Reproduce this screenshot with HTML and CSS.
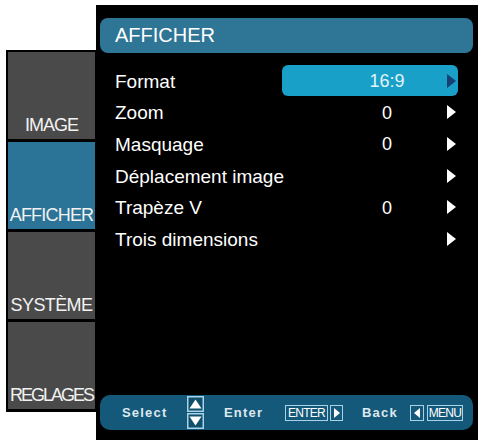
FILE: index.html
```html
<!DOCTYPE html>
<html>
<head>
<meta charset="utf-8">
<link rel="stylesheet" href="styles.css">
</head>
<body>
  <nav class="sidebar">
    <div class="tab"><span class="tab-label ls-image">IMAGE</span></div>
    <div class="tab tab-active"><span class="tab-label ls-afficher">AFFICHER</span></div>
    <div class="tab"><span class="tab-label ls-systeme">SYSTÈME</span></div>
    <div class="tab"><span class="tab-label ls-reglages">REGLAGES</span></div>
  </nav>
  <main class="panel">
    <header class="title-bar">AFFICHER</header>
    <ul class="rows">
      <li class="row row-selected">
        <span class="label">Format</span>
        <span class="cell"><span class="value value-selected">16:9</span><span class="arrow arrow-dark"></span></span>
      </li>
      <li class="row">
        <span class="label">Zoom</span>
        <span class="cell"><span class="value">0</span><span class="arrow"></span></span>
      </li>
      <li class="row">
        <span class="label">Masquage</span>
        <span class="cell"><span class="value">0</span><span class="arrow"></span></span>
      </li>
      <li class="row">
        <span class="label">Déplacement image</span>
        <span class="cell"><span class="value"></span><span class="arrow"></span></span>
      </li>
      <li class="row">
        <span class="label">Trapèze V</span>
        <span class="cell"><span class="value">0</span><span class="arrow"></span></span>
      </li>
      <li class="row">
        <span class="label">Trois dimensions</span>
        <span class="cell"><span class="value"></span><span class="arrow"></span></span>
      </li>
    </ul>
    <footer class="help-bar">
      <span class="help-text help-select">Select</span>
      <svg class="updown" width="17" height="33" viewBox="0 0 17 33">
        <rect x="0.75" y="0.75" width="15.5" height="14.5" fill="#10506d" stroke="#a6d3e8" stroke-width="1.5"/>
        <polygon points="2.5,12.5 8.5,3.5 14.5,12.5" fill="#ffffff"/>
        <rect x="0.75" y="17.75" width="15.5" height="14.5" fill="#10506d" stroke="#a6d3e8" stroke-width="1.5"/>
        <polygon points="2.5,20.5 8.5,29.5 14.5,20.5" fill="#ffffff"/>
      </svg>
      <span class="help-text help-enter">Enter</span>
      <span class="key key-enter">ENTER</span>
      <span class="key key-arrow"><span class="tri-right"></span></span>
      <span class="help-text help-back">Back</span>
      <span class="key key-arrow key-left"><span class="tri-left"></span></span>
      <span class="key key-menu">MENU</span>
    </footer>
  </main>
</body>
</html>
```
FILE: styles.css
```css
* {
  box-sizing: border-box;
}

html, body {
  margin: 0;
  padding: 0;
}

body {
  width: 478px;
  height: 440px;
  overflow: hidden;
  background: #ffffff;
  display: flex;
  align-items: flex-start;
  font-family: "Liberation Sans", Arial, sans-serif;
}

/* ---------- sidebar ---------- */
.sidebar {
  margin-top: 50px;
  margin-left: 6px;
  width: 90px;
  background: #000000;
  padding: 2px 1px 3px 2px;
  display: flex;
  flex-direction: column;
  gap: 3px;
}

.tab {
  height: 87px;
  background: #4a4a4a;
  display: flex;
  align-items: flex-end;
  justify-content: center;
  padding-bottom: 5px;
  overflow: visible;
}

.tab-active {
  background: #2c7398;
}

.tab-label {
  color: #f2f2f2;
  font-size: 18px;
  line-height: 18px;
  white-space: nowrap;
}

.ls-image { letter-spacing: -1px; }
.ls-afficher { letter-spacing: -0.8px; }
.ls-systeme { letter-spacing: -0.6px; }
.ls-reglages { letter-spacing: -2px; }

/* ---------- main panel ---------- */
.panel {
  margin-top: 5px;
  width: 382px;
  height: 435px;
  background: #000000;
  padding: 13px 5px 10px 4px;
  display: flex;
  flex-direction: column;
}

.title-bar {
  height: 35px;
  background: #2f7596;
  border-radius: 8px;
  color: #ffffff;
  font-size: 20px;
  line-height: 35px;
  padding-left: 15px;
}

.rows {
  list-style: none;
  margin: 12px 0 0 0;
  padding: 0;
}

.row {
  height: 31.6px;
  display: flex;
  align-items: center;
  color: #ffffff;
  font-size: 19px;
}

.label {
  width: 182px;
  flex: none;
  padding-left: 15px;
  padding-top: 2px;
  white-space: nowrap;
}

.cell {
  width: 176px;
  height: 31px;
  flex: none;
  display: flex;
  align-items: center;
  border-radius: 6px;
}

.row-selected .cell {
  background: #18a0c8;
}

.value {
  width: 80px;
  margin-left: 65px;
  padding-top: 2px;
  text-align: center;
  font-size: 18px;
}

.value-selected {
  color: #e2f3f9;
}

.arrow {
  margin-left: 20px;
  width: 0;
  height: 0;
  border-left: 9px solid #ffffff;
  border-top: 7px solid transparent;
  border-bottom: 7px solid transparent;
}

.arrow-dark {
  border-left-color: #173f73;
  border-top-width: 7.5px;
  border-bottom-width: 7.5px;
}

/* ---------- help bar ---------- */
.help-bar {
  margin-top: auto;
  height: 35px;
  background: #14587a;
  border-radius: 10px;
  display: flex;
  align-items: center;
  padding-left: 22px;
}

.help-text {
  color: #dde9ef;
  font-size: 13px;
  font-weight: bold;
  letter-spacing: 1.2px;
  white-space: nowrap;
}

.help-select {
  width: 43px;
}

.updown {
  margin-left: 22px;
  flex: none;
}

.help-enter {
  margin-left: 20px;
  width: 39px;
}

.key {
  height: 16px;
  border: 1px solid #a6d3e8;
  color: #ffffff;
  font-size: 12px;
  line-height: 14px;
  text-align: center;
  letter-spacing: -0.7px;
  display: flex;
  align-items: center;
  justify-content: center;
  flex: none;
}

.key-enter {
  margin-left: 22px;
  width: 43px;
}

.key-arrow {
  margin-left: 2px;
  width: 13px;
}

.key-left {
  margin-left: 12px;
  width: 14px;
}

.key-menu {
  margin-left: 3px;
  width: 36px;
}

.help-back {
  margin-left: 19px;
  width: 36px;
}

.tri-right {
  width: 0;
  height: 0;
  border-left: 6px solid #ffffff;
  border-top: 5px solid transparent;
  border-bottom: 5px solid transparent;
}

.tri-left {
  width: 0;
  height: 0;
  border-right: 6px solid #ffffff;
  border-top: 5px solid transparent;
  border-bottom: 5px solid transparent;
}
```
